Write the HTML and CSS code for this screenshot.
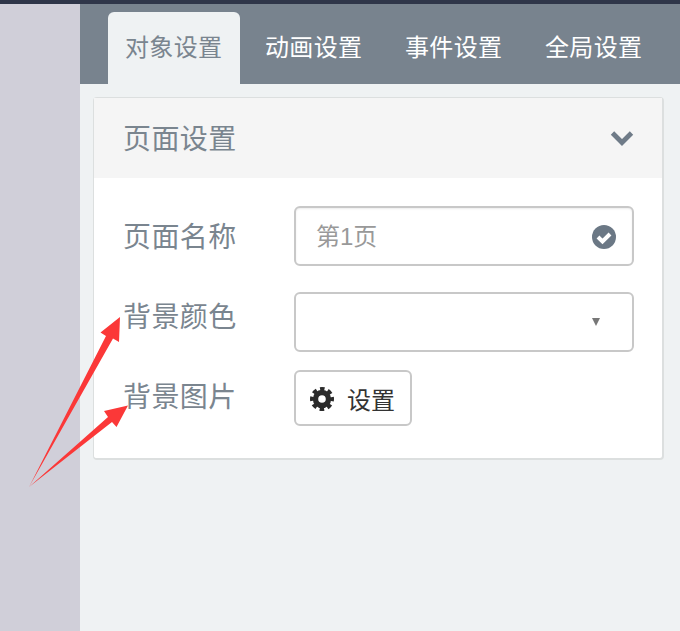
FILE: index.html
```html
<!DOCTYPE html>
<html lang="zh-CN">

<head>
    <meta charset="UTF-8">
    <title>页面设置</title>
    <link rel="stylesheet" href="styles.css">
</head>

<body>

    <div class="top-line"></div>

    <div class="layout">
        <div class="sidebar"></div>

        <div class="main">
            <div class="tabs">
                <div class="tab active">对象设置</div>
                <div class="tab">动画设置</div>
                <div class="tab">事件设置</div>
                <div class="tab">全局设置</div>
            </div>

            <div class="panel">
                <div class="panel-header">
                    <span class="panel-title">页面设置</span>
                    <svg class="chevron" viewBox="0 0 24 16" width="24" height="16">
                        <path d="M2.5 3 L12 12.5 L21.5 3" fill="none" stroke="#6f7b88" stroke-width="4.8"></path>
                    </svg>
                </div>

                <div class="panel-body">
                    <div class="row row-name">
                        <label class="row-label">页面名称</label>
                        <div class="field">
                            <span class="placeholder">第1页</span>
                            <svg class="check" viewBox="0 0 24 24" width="24" height="24">
                                <circle cx="12" cy="12" r="12" fill="#6b7885"></circle>
                                <path d="M6 12 L10.5 16.5 L18 9" fill="none" stroke="#fff" stroke-width="4"></path>
                            </svg>
                        </div>
                    </div>

                    <div class="row row-color">
                        <label class="row-label">背景颜色</label>
                        <div class="field field-plain">
                            <span class="caret"></span>
                        </div>
                    </div>

                    <div class="row row-image">
                        <label class="row-label">背景图片</label>
                        <button class="set-btn">
                            <svg class="gear" viewBox="0 0 24 24" width="24" height="24">
                                <circle cx="12" cy="12" r="6.5" fill="none" stroke="#2b2b2b" stroke-width="5.4"></circle>
                                <circle cx="12" cy="12" r="10" fill="none" stroke="#2b2b2b" stroke-width="4" stroke-dasharray="4.4 3.45" stroke-dashoffset="2.2"></circle>
                            </svg>
                            <span>设置</span>
                        </button>
                    </div>
                </div>
            </div>
        </div>
    </div>

    <!-- red arrows drawn over the screenshot -->
    <svg class="arrows" viewBox="0 0 680 631" width="680" height="631">
        <path d="M29 487 L106 336 L100.5 332.5 L120 317 L119 342 L113 338.5 Z" fill="#fb3838"></path>
        <path d="M29 487 L108 417 L104 411 L128 405.5 L116.5 427 L112 422 Z" fill="#fb3838"></path>
    </svg>

</body>

</html>
```

FILE: styles.css
```css
body {
    margin: 0;
    width: 680px;
    height: 631px;
    overflow: hidden;
    position: relative;
    background-color: #eff2f3;
    font-family: "Liberation Sans", "Noto Sans CJK SC", sans-serif;
}

.top-line {
    height: 4px;
    background-color: #2f3649;
}

.layout {
    display: flex;
    height: 627px;
}

.sidebar {
    width: 80px;
    background-color: #d0cfd9;
}

.main {
    flex: 1;
}

.tabs {
    display: flex;
    gap: 8px;
    height: 72px;
    padding: 8px 0 0 28px;
    background-color: #78838e;
}

.tab {
    padding: 0 17.5px 0 17px;
    font-size: 24px;
    line-height: 71px;
    letter-spacing: 0.375px;
    color: white;
}

.tab.active {
    background-color: #eff2f3;
    color: #7a858f;
    border-radius: 6px 6px 0 0;
}

.panel {
    width: 568px;
    margin: 13px 0 0 13px;
    background-color: white;
    border: 1px solid #dcdfdf;
    border-width: 1px 2px 2px 1px;
    border-radius: 4px;
}

.panel-header {
    display: flex;
    justify-content: space-between;
    align-items: center;
    height: 80px;
    padding: 0 28px 0 30px;
    background-color: #f5f5f5;
}

.panel-title {
    margin: -3px 0 0 -1px;
    font-size: 28px;
    letter-spacing: 0.4px;
    color: #7a858f;
}

.panel-body {
    padding: 28px 28px 32px 30px;
}

.row {
    display: flex;
}

.row-name,
.row-color {
    height: 60px;
}

.row-image {
    height: 56px;
}

.row-color {
    margin-top: 26px;
}

.row-image {
    margin-top: 18px;
}

.row-label {
    width: 170px;
    margin-left: -1px;
    margin-right: 1px;
    font-size: 28px;
    letter-spacing: 0.4px;
    color: #7a858f;
}

.row-name .row-label {
    line-height: 64px;
}

.row-color .row-label {
    line-height: 52px;
}

.row-image .row-label {
    line-height: 56px;
}

.field {
    display: flex;
    align-items: center;
    justify-content: space-between;
    box-sizing: border-box;
    width: 340px;
    height: 60px;
    padding: 0 16px 0 20px;
    background-color: white;
    border: 2px solid #c8c8c8;
    border-radius: 6px;
    box-shadow: inset 0 1px 2px rgba(0, 0, 0, 0.08);
}

.field-plain {
    box-shadow: none;
}

.placeholder {
    font-size: 24px;
    color: #999;
    margin-bottom: 3px;
}

.check {
    margin-top: 2px;
}

.caret {
    width: 0;
    height: 0;
    margin: 0 0 0 auto;
    transform: translateX(-16px);
    border-style: solid;
    border-width: 8px 4px 0 4px;
    border-color: #777 transparent transparent transparent;
}

.set-btn {
    display: flex;
    align-items: center;
    gap: 13px;
    box-sizing: border-box;
    width: 118px;
    height: 56px;
    padding: 0 0 0 14px;
    background-color: white;
    border: 2px solid #c8c8c8;
    border-radius: 6px;
    font-family: inherit;
    font-size: 24px;
    color: #333;
}

.gear {
    margin-top: 1px;
}

.arrows {
    position: absolute;
    top: 0;
    left: 0;
    pointer-events: none;
}
```
